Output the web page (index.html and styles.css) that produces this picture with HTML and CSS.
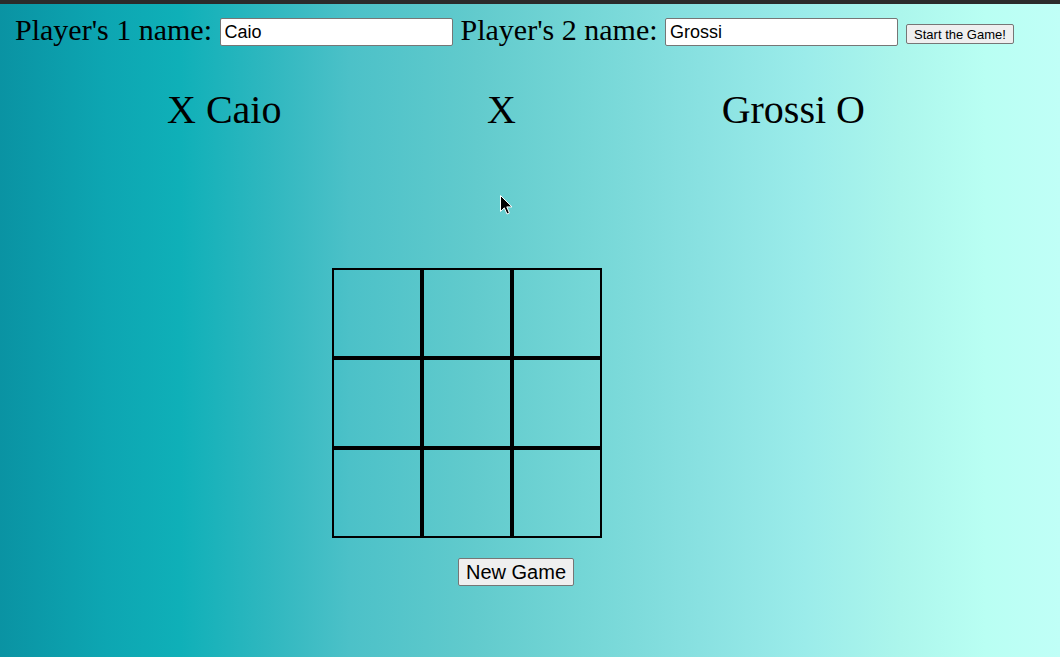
FILE: index.html
```html
<!DOCTYPE html>
<html lang="en">
<head>
<meta charset="utf-8">
<title>Tic Tac Toe</title>
<link rel="stylesheet" href="styles.css">
</head>
<body>
<div class="topbar"></div>
<main class="page">
  <div class="setup">
    <label class="field"><span class="label-text">Player's 1 name: </span><input class="name-input" type="text" value="Caio"></label>
    <label class="field"><span class="label-text">Player's 2 name: </span><input class="name-input" type="text" value="Grossi"></label>
    <button class="start-btn" type="button">Start the Game!</button>
  </div>
  <div class="scores">
    <span class="score">X Caio</span>
    <span class="score">X</span>
    <span class="score">Grossi O</span>
  </div>
  <div class="board">
    <div class="cell"></div><div class="cell"></div><div class="cell"></div>
    <div class="cell"></div><div class="cell"></div><div class="cell"></div>
    <div class="cell"></div><div class="cell"></div><div class="cell"></div>
  </div>
  <div class="actions">
    <button class="new-btn" type="button">New Game</button>
  </div>
</main>
<svg class="cursor" width="13" height="20" viewBox="0 0 13 20" aria-hidden="true">
  <path d="M0.5 0.5 L0.5 16.5 L4.3 12.8 L7 19 L9.4 18 L6.8 11.9 L12 11.9 Z" fill="#000" stroke="#fff" stroke-width="1"/>
</svg>
</body>
</html>
```

FILE: styles.css
```css
html, body {
  margin: 0;
  padding: 0;
  height: 100%;
}

body {
  position: relative;
  min-height: 657px;
  overflow: hidden;
  font-family: "Liberation Serif", "Times New Roman", serif;
  color: #000;
  background: linear-gradient(to right,
    #0a93a3 0%,
    #0da6b2 10%,
    #0fb0b8 17%,
    #2eb7bf 25%,
    #4cc1c8 33%,
    #62cbcd 45%,
    #74d6d6 55%,
    #89e1e1 66%,
    #9becea 76%,
    #acf6ec 85%,
    #b9fff3 93%,
    #c0fff7 100%);
}

.topbar {
  height: 4px;
  background: #2b2b2b;
}

.page {
  padding: 0 0 0 15px;
}

.setup {
  display: flex;
  align-items: center;
  margin-top: 14px;
  height: 28px;
  font-size: 30px;
}

.field {
  display: flex;
  align-items: center;
  white-space: pre;
  margin-right: 8px;
  line-height: 28px;
}

.label-text {
  padding-bottom: 4px;
}

.name-input {
  box-sizing: border-box;
  width: 233px;
  height: 28px;
  margin: 0;
  padding: 1px 4px;
  border: 1px solid #767676;
  border-radius: 2px;
  background: #fff;
  font-family: "Liberation Sans", Arial, sans-serif;
  font-size: 18px;
  color: #000;
}

.start-btn {
  box-sizing: border-box;
  height: 20px;
  margin: 4px 0 0 0;
  padding: 0 7px;
  border: 1px solid #767676;
  border-radius: 2px;
  background: #efefef;
  font-family: "Liberation Sans", Arial, sans-serif;
  font-size: 13px;
  color: #000;
}

.scores {
  display: flex;
  justify-content: space-between;
  width: 698px;
  margin: 42px 0 0 152px;
  font-size: 40px;
  line-height: 44px;
}

.board {
  display: grid;
  grid-template-columns: repeat(3, 90px);
  grid-template-rows: repeat(3, 90px);
  width: 270px;
  margin: 136px 0 0 317px;
}

.cell {
  box-sizing: border-box;
  border: 2px solid #000;
}

.actions {
  margin: 20px 0 0 443px;
}

.new-btn {
  box-sizing: border-box;
  height: 28px;
  width: 116px;
  margin: 0;
  padding: 0 6px;
  border: 1px solid #767676;
  border-radius: 2px;
  background: #efefef;
  font-family: "Liberation Sans", Arial, sans-serif;
  font-size: 20px;
  color: #000;
}

.cursor {
  position: absolute;
  left: 500px;
  top: 195px;
}
```
